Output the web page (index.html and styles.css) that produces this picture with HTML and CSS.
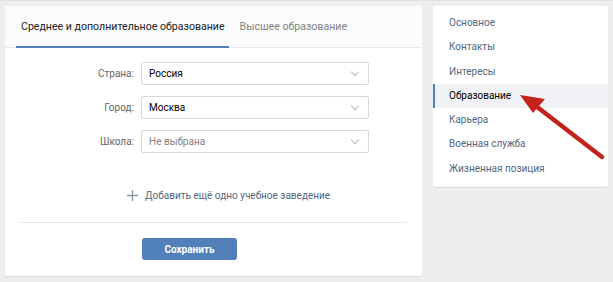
FILE: index.html
```html
<!DOCTYPE html>
<html lang="ru">
<head>
  <meta charset="UTF-8" />
  <title>Редактирование — Образование</title>
  <link rel="stylesheet" href="styles.css">
</head>
<body>
  <div class="page">
    <div class="edit-card">
      <div class="tabs">
        <span class="tab active">Среднее и дополнительное образование</span>
        <span class="tab">Высшее образование</span>
      </div>

      <div class="form">
        <div class="row">
          <label class="row-label">Страна:</label>
          <div class="select">Россия<span class="chevron"></span></div>
        </div>
        <div class="row">
          <label class="row-label">Город:</label>
          <div class="select">Москва<span class="chevron"></span></div>
        </div>
        <div class="row">
          <label class="row-label">Школа:</label>
          <div class="select placeholder">Не выбрана<span class="chevron"></span></div>
        </div>
      </div>

      <div class="add-link">
        <svg class="plus" width="11" height="11" viewBox="0 0 11 11">
          <path d="M5.5 0v11M0 5.5h11" stroke="#8c97a4" stroke-width="1.4" fill="none" />
        </svg>
        Добавить ещё одно учебное заведение
      </div>

      <div class="divider"></div>

      <div class="actions">
        <button type="button" class="save-btn">Сохранить</button>
      </div>
    </div>

    <div class="side-menu">
      <div class="menu-item">Основное</div>
      <div class="menu-item">Контакты</div>
      <div class="menu-item">Интересы</div>
      <div class="menu-item selected">Образование</div>
      <div class="menu-item">Карьера</div>
      <div class="menu-item">Военная служба</div>
      <div class="menu-item">Жизненная позиция</div>
    </div>
  </div>

  <!-- red pointer arrow -->
  <svg class="pointer" width="613" height="282" viewBox="0 0 613 282">
    <line x1="602" y1="157" x2="532" y2="103" stroke="#c3231b" stroke-width="4.5" stroke-linecap="round" />
    <polygon points="520,95 545,99 533,113" fill="#c3231b" />
  </svg>
</body>
</html>
```

FILE: styles.css
```css
* {
  box-sizing: border-box;
}

body {
  margin: 0;
  background: #edeef0;
  font-family: Roboto, "Noto Sans", sans-serif;
  font-size: 10px;
  color: #000;
  position: relative;
}

.page {
  display: flex;
  align-items: flex-start;
  gap: 11px;
  padding: 5px;
  height: 282px;
  border-top: 1px solid #dfe1e5;
}

.edit-card {
  width: 417px;
  background: #fff;
  border-radius: 2px;
  box-shadow: 0 1px 0 0 #d7d8db;
  padding-bottom: 16px;
}

.tabs {
  display: flex;
  gap: 2px;
  height: 42px;
  padding: 0 11px;
  background: #fafbfc;
  border-bottom: 1px solid #e7e8ec;
}

.tab {
  display: flex;
  align-items: center;
  padding: 0 4px;
  color: #828282;
  font-size: 10.6px;
  border-bottom: 2px solid transparent;
  margin-bottom: -1px;
}

.tab.active {
  color: #222;
  border-bottom-color: #5181b8;
  padding: 0 4px 0 5px;
  margin-right: 5px;
}

.form {
  display: flex;
  flex-direction: column;
  gap: 11px;
  padding-top: 14px;
}

.row {
  display: flex;
  align-items: center;
}

.row-label {
  width: 129px;
  margin-right: 7px;
  text-align: right;
  color: #656565;
}

.select {
  position: relative;
  width: 228px;
  height: 23px;
  line-height: 21px;
  padding: 0 7px;
  border: 1px solid #d3d9de;
  border-radius: 2px;
  color: #000;
}

.select.placeholder {
  color: #828282;
}

.chevron {
  position: absolute;
  right: 10px;
  top: 6px;
  width: 6px;
  height: 6px;
  border-right: 1px solid #b4bcc6;
  border-bottom: 1px solid #b4bcc6;
  transform: rotate(45deg);
}

.add-link {
  display: flex;
  align-items: center;
  gap: 7px;
  height: 17px;
  margin: 34px 0 18px;
  padding-left: 122px;
  color: #55677d;
}

.divider {
  height: 1px;
  margin: 0 15px;
  background: #e7e8ec;
}

.actions {
  padding: 15px 0 0 137px;
}

.save-btn {
  width: 95px;
  height: 22px;
  border: none;
  border-radius: 3px;
  background: #5181b8;
  color: #fff;
  font-family: inherit;
  font-size: 10px;
  font-weight: 700;
  cursor: pointer;
}

.side-menu {
  width: 175px;
  background: #fff;
  border-radius: 2px;
  box-shadow: 0 1px 0 0 #d7d8db;
  padding: 5px 0 6px;
}

.menu-item {
  height: 24.3px;
  line-height: 24px;
  padding-left: 14px;
  color: #55677d;
  border-left: 2px solid transparent;
}

.menu-item.selected {
  background: #f0f2f5;
  border-left-color: #5181b8;
  color: #000;
}

.pointer {
  position: absolute;
  top: 0;
  left: 0;
  pointer-events: none;
}
```
